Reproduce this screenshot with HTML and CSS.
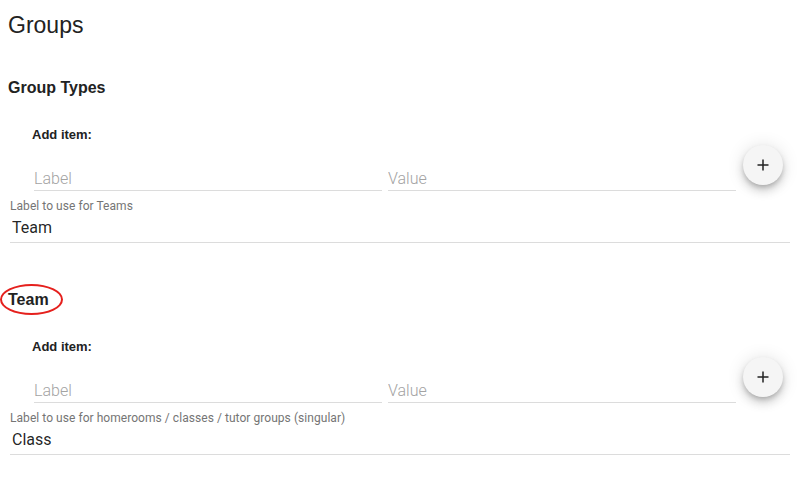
FILE: index.html
```html
<!DOCTYPE html>
<html lang="en">
<head>
<meta charset="utf-8">
<title>Groups</title>
<link rel="stylesheet" href="styles.css">
</head>
<body>
<main class="page">
  <h1 class="title">Groups</h1>

  <section class="group">
    <h2 class="group-title">Group Types</h2>
    <div class="add">
      <h3 class="add-title">Add item:</h3>
      <div class="add-row">
        <div class="field"><input class="input" type="text" placeholder="Label"></div>
        <div class="field"><input class="input" type="text" placeholder="Value"></div>
        <button class="fab" type="button" aria-label="Add">
          <svg width="12" height="12" viewBox="0 0 12 12"><path d="M6 0.5v11M0.5 6h11" stroke="#222" stroke-width="1.5" fill="none"/></svg>
        </button>
      </div>
    </div>
    <div class="text-field">
      <label class="helper">Label to use for Teams</label>
      <input class="value" type="text" value="Team">
    </div>
  </section>

  <section class="group group-next">
    <h2 class="group-title marked">Team<span class="ring"></span></h2>
    <div class="add">
      <h3 class="add-title">Add item:</h3>
      <div class="add-row">
        <div class="field"><input class="input" type="text" placeholder="Label"></div>
        <div class="field"><input class="input" type="text" placeholder="Value"></div>
        <button class="fab" type="button" aria-label="Add">
          <svg width="12" height="12" viewBox="0 0 12 12"><path d="M6 0.5v11M0.5 6h11" stroke="#222" stroke-width="1.5" fill="none"/></svg>
        </button>
      </div>
    </div>
    <div class="text-field">
      <label class="helper">Label to use for homerooms / classes / tutor groups (singular)</label>
      <input class="value" type="text" value="Class">
    </div>
  </section>
</main>
</body>
</html>
```

FILE: styles.css
```css
* { box-sizing: border-box; }

html, body {
  margin: 0;
  padding: 0;
  background: #fff;
}

body {
  font-family: "Liberation Sans", Arial, sans-serif;
  color: #222;
}

.page {
  padding: 12px 7px 0 8px;
}

.title {
  margin: 0;
  font-size: 23px;
  line-height: 26px;
  font-weight: 400;
  color: #222;
}

.group {
  padding-top: 40px;
}

.group-next {
  padding-top: 47px;
}

.group-title {
  margin: 0;
  font-size: 16px;
  line-height: 20px;
  font-weight: 700;
  color: #222;
}

.marked {
  position: relative;
}

.ring {
  position: absolute;
  left: -8px;
  top: -6px;
  width: 63px;
  height: 31px;
  border: 2px solid #e5201d;
  border-radius: 50%;
}

.add {
  padding-left: 24px;
  padding-top: 29px;
}

.add-title {
  margin: 0;
  font-size: 13px;
  line-height: 16px;
  font-weight: 700;
  color: #222;
}

.add-row {
  display: flex;
  align-items: flex-start;
  margin-top: 2px;
  padding-left: 2px;
  padding-right: 7px;
}

.field {
  flex: 1 1 0;
  margin-top: 24px;
  margin-right: 6px;
}

.field + .field {
  margin-right: 7px;
}

.input,
.value {
  display: block;
  width: 100%;
  margin: 0;
  border: 0;
  border-bottom: 1px solid #dcdcdc;
  border-radius: 0;
  outline: none;
  background: transparent;
  font-family: Roboto, "Liberation Sans", sans-serif;
  font-size: 16px;
  line-height: 19px;
  height: 22px;
  color: rgba(0, 0, 0, 0.87);
}

.input {
  padding: 0 0 2px 0;
  font-weight: 300;
}

.input::placeholder {
  color: #a3a3a3;
  opacity: 1;
}

.fab {
  flex: 0 0 40px;
  width: 40px;
  height: 40px;
  border: 0;
  border-radius: 50%;
  background: #f5f5f5;
  padding: 0;
  display: flex;
  align-items: center;
  justify-content: center;
  box-shadow: 0 3px 5px -1px rgba(0, 0, 0, 0.2), 0 6px 10px 0 rgba(0, 0, 0, 0.14), 0 1px 18px 0 rgba(0, 0, 0, 0.12);
}

.text-field {
  margin-top: 8px;
  margin-left: 2px;
}

.helper {
  display: block;
  font-family: Roboto, "Liberation Sans", sans-serif;
  font-size: 12px;
  line-height: 14px;
  letter-spacing: 0.05px;
  color: #757575;
}

.value {
  margin-top: 5px;
  height: 25px;
  padding: 0 0 5px 2px;
}
```
